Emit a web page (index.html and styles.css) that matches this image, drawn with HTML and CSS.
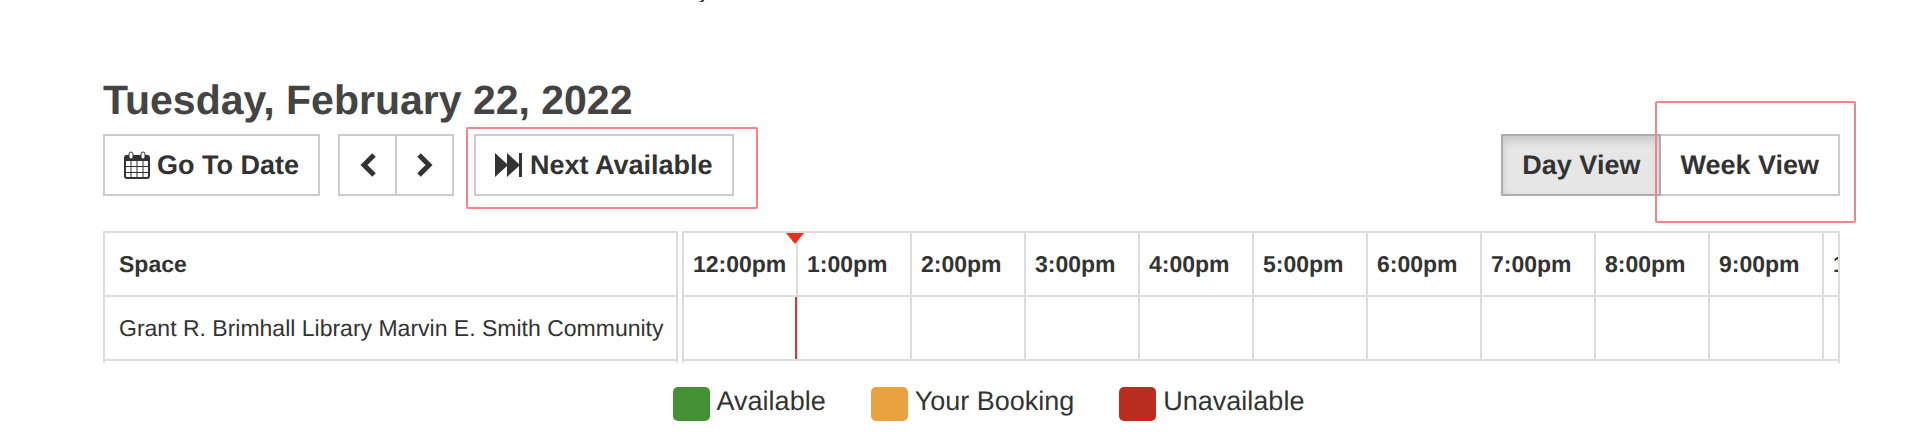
FILE: index.html
```html
<!DOCTYPE html>
<html lang="en">
<head>
    <meta charset="UTF-8">
    <meta name="viewport" content="width=device-width, initial-scale=1.0">
    <title>Space Availability</title>
    <link rel="stylesheet" href="styles.css">
</head>
<body>
    <p class="intro">y</p>

    <main class="page">
        <h1 class="date-title">Tuesday, February 22, 2022</h1>

        <div class="toolbar">
            <button type="button" class="btn">
                <svg class="icon-calendar" viewBox="0 0 26 28" aria-hidden="true">
                    <rect x="1" y="5" width="24" height="22" rx="2" fill="none" stroke="#333" stroke-width="2"/>
                    <rect x="1" y="4" width="24" height="6" rx="1" fill="#333"/>
                    <path d="M7 10v17M13 10v17M19 10v17M1 15.500h24M1 21.500h24" stroke="#333" stroke-width="1"/>
                    <rect x="5" y="1" width="4" height="7" rx="2" fill="#fff" stroke="#333"/>
                    <rect x="17" y="1" width="4" height="7" rx="2" fill="#fff" stroke="#333"/>
                </svg>
                Go To Date
            </button>

            <div class="btn-group">
                <button type="button" class="btn btn-arrow" aria-label="Previous">
                    <svg class="icon-arrow" viewBox="0 0 16 26" aria-hidden="true">
                        <path d="M14 3L4 13l10 10" fill="none" stroke="#333" stroke-width="5"/>
                    </svg>
                </button>
                <button type="button" class="btn btn-arrow" aria-label="Next">
                    <svg class="icon-arrow" viewBox="0 0 16 26" aria-hidden="true">
                        <path d="M2 3l10 10L2 23" fill="none" stroke="#333" stroke-width="5"/>
                    </svg>
                </button>
            </div>

            <div class="marked marked-next">
                <button type="button" class="btn">
                    <svg class="icon-forward" viewBox="0 0 28 24" aria-hidden="true">
                        <path d="M0 0l12 11V0l12 11V0h3v24h-3V13L12 24V13L0 24z" fill="#333"/>
                    </svg>
                    Next Available
                </button>
            </div>

            <div class="btn-group views">
                <button type="button" class="btn btn-view active">Day View</button>
                <div class="marked marked-week">
                    <button type="button" class="btn btn-view">Week View</button>
                </div>
            </div>
        </div>

        <div class="schedule">
            <div class="spaces">
                <table>
                    <tr><th>Space</th></tr>
                    <tr><td>Grant R. Brimhall Library Marvin E. Smith Community</td></tr>
                </table>
            </div>
            <div class="times">
                <table>
                    <tr>
                        <th>12:00pm</th>
                        <th>1:00pm</th>
                        <th>2:00pm</th>
                        <th>3:00pm</th>
                        <th>4:00pm</th>
                        <th>5:00pm</th>
                        <th>6:00pm</th>
                        <th>7:00pm</th>
                        <th>8:00pm</th>
                        <th>9:00pm</th>
                        <th>10:00pm</th>
                    </tr>
                    <tr>
                        <td></td>
                        <td></td>
                        <td></td>
                        <td></td>
                        <td></td>
                        <td></td>
                        <td></td>
                        <td></td>
                        <td></td>
                        <td></td>
                        <td></td>
                    </tr>
                </table>
                <span class="now-arrow"></span>
                <span class="now-line"></span>
            </div>
        </div>

        <ul class="legend">
            <li><span class="swatch available"></span>Available</li>
            <li><span class="swatch booking"></span>Your Booking</li>
            <li><span class="swatch unavailable"></span>Unavailable</li>
        </ul>
    </main>
</body>
</html>
```
FILE: styles.css
```css
* {
    box-sizing: border-box;
}

body {
    margin: 0;
    background-color: #fff;
    color: #333;
    font-family: "Liberation Sans", Arial, sans-serif;
    text-rendering: geometricPrecision;
}

/* last line of the text above, scrolled out of view */
.intro {
    display: flex;
    align-items: flex-end;
    height: 2px;
    margin: 0;
    padding-left: 697px;
    overflow: hidden;
    font-size: 27px;
    line-height: 26px;
}

.page {
    padding: 74px 80px 0 103px;
}

.date-title {
    margin: 0;
    color: #444;
    font-size: 41px;
    line-height: 48px;
}

.toolbar {
    display: flex;
    align-items: flex-start;
    margin-top: 10px;
}

.btn {
    display: flex;
    align-items: center;
    justify-content: center;
    gap: 7px;
    height: 62px;
    padding: 0 19px;
    border: 2px solid #ccc;
    border-radius: 0;
    background-color: #fff;
    color: #333;
    font-family: inherit;
    font-size: 27px;
    font-weight: bold;
    text-rendering: inherit;
    white-space: nowrap;
    cursor: pointer;
}

.btn-group {
    display: flex;
    margin-left: 18px;
    margin-right: 20px;
}

.btn-arrow {
    width: 59px;
}

.btn-arrow + .btn-arrow {
    margin-left: -2px;
}

.icon-calendar {
    width: 26px;
    height: 28px;
}

.icon-arrow {
    width: 16px;
    height: 26px;
}

.icon-forward {
    width: 28px;
    height: 24px;
}

.views {
    margin-left: auto;
    margin-right: 0;
}

.active {
    border-color: #adadad;
    background-color: #e6e6e6;
    box-shadow: inset 0 5px 8px rgba(0, 0, 0, 0.13);
}

/* red outlines around the highlighted buttons */
.marked {
    position: relative;
}

.marked::after {
    content: "";
    position: absolute;
    border: 2px solid #f4838a;
    border-radius: 2px;
    pointer-events: none;
}

.marked-next::after {
    inset: -7px -24px -13px -8px;
}

.marked-week::after {
    inset: -33px -16px -27px -6px;
}

.marked-week .btn {
    border-left: none;
}

.schedule {
    display: flex;
    gap: 4px;
    margin-top: 35px;
}

.schedule table {
    border-collapse: separate;
    border-spacing: 0;
    table-layout: fixed;
    width: 100%;
}

.schedule th,
.schedule td {
    height: 64px;
    padding: 0;
    border-bottom: 2px solid #ddd;
    font-size: 23px;
    text-align: left;
    white-space: nowrap;
    overflow: hidden;
}

.spaces {
    flex: none;
    width: 575px;
    padding-bottom: 2px;
    border: 2px solid #ddd;
    border-bottom: none;
}

.spaces th,
.spaces td {
    padding-left: 14px;
}

.times {
    position: relative;
    flex: 1;
    padding-bottom: 2px;
    border: 2px solid #ddd;
    border-bottom: none;
    overflow: hidden;
}

.times table {
    width: 1254px;
}

.times th,
.times td {
    padding-left: 9px;
    border-right: 2px solid #ddd;
}

.now-arrow {
    position: absolute;
    top: 0;
    left: 102px;
    border: 9px solid transparent;
    border-top: 11px solid #e8301f;
    border-bottom: none;
}

.now-line {
    position: absolute;
    top: 64px;
    bottom: 4px;
    left: 111px;
    width: 2px;
    background-color: #c23b35;
}

.legend {
    display: flex;
    justify-content: center;
    gap: 45px;
    margin: 24px 0 0;
    padding: 0 0 0 34px;
    list-style: none;
    font-size: 27px;
    line-height: 28px;
}

.legend li {
    display: flex;
    gap: 7px;
}

.swatch {
    width: 37px;
    height: 34px;
    border-radius: 5px;
}

.available {
    background-color: #449034;
}

.booking {
    background-color: #e8a23f;
}

.unavailable {
    background-color: #b82d1f;
}
```
